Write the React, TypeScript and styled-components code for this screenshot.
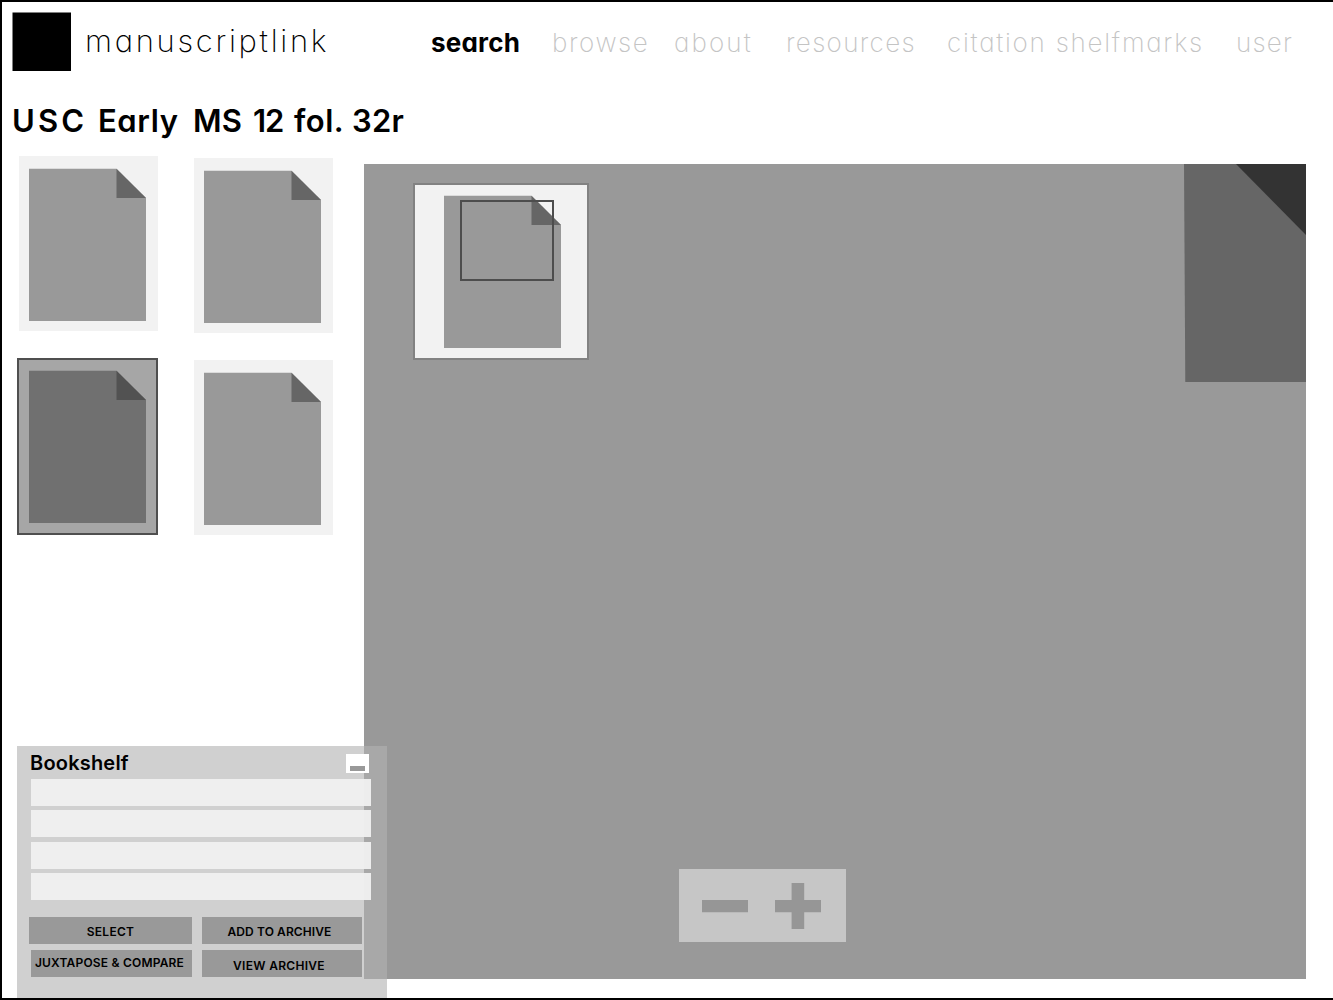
import React from 'react';
import styled, { createGlobalStyle } from 'styled-components';

const GlobalStyle = createGlobalStyle`
  *, *::before, *::after { box-sizing: border-box; }
  body { margin: 0; background: #fff; overflow: hidden; }
  button { font: inherit; border: 0; padding: 0; cursor: pointer; }
`;

const Frame = styled.div`
  position: relative;
  width: 1333px;
  height: 1000px;
  border: 2px solid #000;
  border-right: 0;
  background: #fff;
  color: #000;
  font-family: Inter, 'Liberation Sans', sans-serif;
  font-feature-settings: 'cv11' 1;
  overflow: hidden;
`;

const Header = styled.header`
  display: flex;
  align-items: center;
  height: 59px;
  margin: 10px 0 0 10px;
`;

const Logo = styled.svg`
  display: block;
  width: 59px;
  height: 59px;
`;

const Brand = styled.div`
  width: 345px;
  padding: 0 0 2px 14px;
  font-size: 31px;
  font-weight: 200;
  line-height: 40px;
  letter-spacing: 2.7px;
  white-space: nowrap;
`;

const Nav = styled.nav`
  display: grid;
  grid-template-columns: 121px 122px 112px 161px 289px 80px;
  padding: 2px 0 0 15px;
  line-height: 40px;
  font-size: 26px;
`;

const NavLink = styled.a<{ $active?: boolean; $track: number }>`
  color: ${(p) => (p.$active ? '#000' : '#c4c4c4')};
  font-weight: ${(p) => (p.$active ? 700 : 200)};
  letter-spacing: ${(p) => p.$track}px;
  white-space: nowrap;
`;

const Title = styled.h1`
  display: flex;
  margin: 30px 0 0 10px;
  font-size: 31px;
  font-weight: 600;
  line-height: 40px;
  white-space: pre;
`;

const TitleWord = styled.span<{ $width: number; $track: number }>`
  width: ${(p) => p.$width}px;
  letter-spacing: ${(p) => p.$track}px;
`;

const Main = styled.main`
  display: flex;
  align-items: flex-start;
  padding: 15px 0 0 15px;
`;

const ThumbColumn = styled.div<{ $width: number; $top?: number }>`
  display: flex;
  flex-direction: column;
  align-items: flex-end;
  gap: 27px;
  width: ${(p) => p.$width}px;
  padding-top: ${(p) => p.$top ?? 0}px;
`;

const Thumb = styled.div<{ $selected?: boolean }>`
  width: ${(p) => (p.$selected ? 141 : 139)}px;
  height: ${(p) => (p.$selected ? 177 : 175)}px;
  padding: ${(p) => (p.$selected ? '10px 10px' : '12px 10px')};
  border: ${(p) => (p.$selected ? '2px solid #4f4f4f' : '0')};
  background: ${(p) => (p.$selected ? '#a6a6a6' : '#f2f2f2')};
`;

const PageSvg = styled.svg`
  display: block;
  width: 117px;
  height: 153px;
`;

const Viewer = styled.section`
  position: relative;
  width: 942px;
  height: 815px;
  margin: 8px 0 0 31px;
  background: #999;
`;

const PageCorner = styled.svg`
  position: absolute;
  top: 0;
  right: 0;
  width: 122px;
  height: 218px;
`;

const Minimap = styled.div`
  position: absolute;
  left: 49px;
  top: 19px;
  width: 176px;
  height: 177px;
  padding: 10px 0 0 29px;
  border: 2px solid #828282;
  background: #f2f2f2;
`;

const Viewport = styled.div`
  position: absolute;
  left: 45px;
  top: 15px;
  width: 94px;
  height: 81px;
  border: 2px solid #4d4d4d;
`;

const ZoomBar = styled.div`
  position: absolute;
  left: 315px;
  top: 705px;
  display: flex;
  align-items: center;
  gap: 27px;
  width: 167px;
  height: 73px;
  padding-left: 23px;
  background: #c6c6c6;
`;

const ZoomButton = styled.button`
  width: 46px;
  height: 46px;
  background: none;
`;

const ZoomIcon = styled.svg`
  display: block;
  width: 46px;
  height: 46px;
  fill: #969696;
`;

const Shelf = styled.aside`
  position: absolute;
  left: 15px;
  bottom: 0;
  width: 370px;
  height: 252px;
  padding: 8px 16px 0 12px;
  background: rgba(178, 178, 178, 0.61);
`;

const ShelfHeader = styled.div`
  display: flex;
  justify-content: space-between;
  align-items: flex-start;
  height: 25px;
  padding: 0 2px 0 1px;
`;

const ShelfTitle = styled.h2`
  margin: 0;
  font-size: 20px;
  font-weight: 600;
  line-height: 18px;
  letter-spacing: 0.2px;
`;

const Minimize = styled.button`
  display: flex;
  justify-content: center;
  align-items: flex-end;
  width: 23px;
  height: 19px;
  padding-bottom: 2px;
  background: #fff;

  &::after {
    content: '';
    width: 15px;
    height: 5px;
    background: #999;
  }
`;

const Slots = styled.ul`
  display: grid;
  grid-template-rows: repeat(4, 27px);
  row-gap: 4.33px;
  margin: 0 0 0 2px;
  padding: 0;
  list-style: none;
`;

const Slot = styled.li`
  width: 340px;
  background: rgba(240, 240, 240, 0.95);
`;

const Actions = styled.div`
  display: grid;
  grid-template-columns: 163px 160px;
  grid-template-rows: 27px 27px;
  gap: 6px 10px;
  margin-top: 17px;
`;

const Action = styled.button<{ $inset?: number; $drop?: number; $shift?: number; $track?: number }>`
  margin-left: ${(p) => p.$inset ?? 0}px;
  padding: ${(p) => p.$drop ?? 0}px ${(p) => p.$shift ?? 0}px 0 0;
  background: #999;
  color: #000;
  font-size: 12px;
  font-weight: 600;
  line-height: 24px;
  letter-spacing: ${(p) => p.$track ?? 0.3}px;
  white-space: nowrap;
`;

const Page = ({ dark = false }: { dark?: boolean }) => (
  <PageSvg viewBox="0 0 117 153">
    <path d="M0 .7H87.5L117 30V153H0Z" fill={dark ? '#707070' : '#999'} />
    <path d="M87.5 .7L117 30H87.5Z" fill={dark ? '#525252' : '#666'} />
  </PageSvg>
);

const links = [
  { label: 'search', track: 0.2, active: true },
  { label: 'browse', track: 1.6 },
  { label: 'about', track: 2.1 },
  { label: 'resources', track: 1.35 },
  { label: 'citation shelfmarks', track: 1.75 },
  { label: 'user', track: 1.2 },
];

const titleWords = [
  { text: 'USC ', width: 86, track: 3.2 },
  { text: 'Early ', width: 95, track: 0.6 },
  { text: 'MS ', width: 60, track: 0.2 },
  { text: '12 ', width: 41, track: -1.2 },
  { text: 'fol. ', width: 58, track: 0.5 },
  { text: '32r', width: 60, track: 0.2 },
];

export default function App() {
  return (
    <Frame>
      <GlobalStyle />
      <Header>
        <Logo viewBox="0 0 59 59">
          <rect x=".5" y=".5" width="58.5" height="58.5" />
        </Logo>
        <Brand>manuscriptlink</Brand>
        <Nav>
          {links.map((l) => (
            <NavLink key={l.label} $active={l.active} $track={l.track}>
              {l.label}
            </NavLink>
          ))}
        </Nav>
      </Header>
      <Title>
        {titleWords.map((w) => (
          <TitleWord key={w.text} $width={w.width} $track={w.track}>
            {w.text}
          </TitleWord>
        ))}
      </Title>
      <Main>
        <ThumbColumn $width={141}>
          <Thumb>
            <Page />
          </Thumb>
          <Thumb $selected>
            <Page dark />
          </Thumb>
        </ThumbColumn>
        <ThumbColumn $width={175} $top={2}>
          <Thumb>
            <Page />
          </Thumb>
          <Thumb>
            <Page />
          </Thumb>
        </ThumbColumn>
        <Viewer>
          <PageCorner viewBox="0 0 122 218">
            <path d="M0 0H53L122 70V218H1.3Z" fill="#666" />
            <path d="M52 0H122V71Z" fill="#333" />
          </PageCorner>
          <Minimap>
            <Page />
            <Viewport />
          </Minimap>
          <ZoomBar>
            <ZoomButton aria-label="Zoom out">
              <ZoomIcon viewBox="0 0 46 46">
                <path d="M0 17h46v12.3H0z" />
              </ZoomIcon>
            </ZoomButton>
            <ZoomButton aria-label="Zoom in">
              <ZoomIcon viewBox="0 0 46 46">
                <path d="M0 17h16.6V0h12.6v17H46v12.3H29.200V46H16.600V29.300H0z" />
              </ZoomIcon>
            </ZoomButton>
          </ZoomBar>
        </Viewer>
      </Main>
      <Shelf>
        <ShelfHeader>
          <ShelfTitle>Bookshelf</ShelfTitle>
          <Minimize aria-label="Minimize" />
        </ShelfHeader>
        <Slots>
          <Slot />
          <Slot />
          <Slot />
          <Slot />
        </Slots>
        <Actions>
          <Action $drop={3}>SELECT</Action>
          <Action $drop={3} $shift={5} $track={0.1}>ADD TO ARCHIVE</Action>
          <Action $inset={2} $drop={0} $shift={4} $track={0.2}>JUXTAPOSE &amp; COMPARE</Action>
          <Action $drop={4} $shift={6}>VIEW ARCHIVE</Action>
        </Actions>
      </Shelf>
    </Frame>
  );
}
